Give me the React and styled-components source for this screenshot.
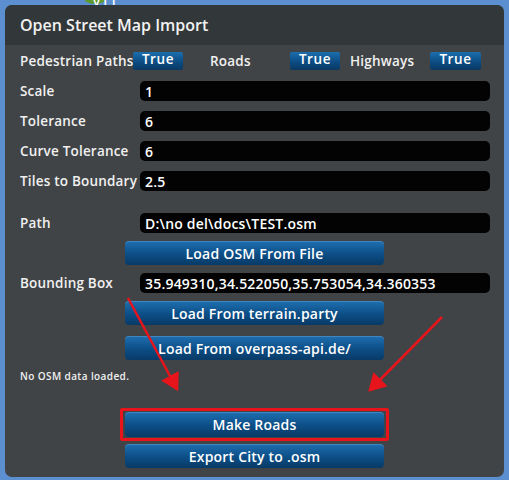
import React from "react";
import styled, { createGlobalStyle } from "styled-components";

const Global = createGlobalStyle`
  html, body {
    margin: 0;
    padding: 0;
    background: #5b8fd0;
    font-family: "Open Sans", "Noto Sans", sans-serif;
    overflow: hidden;
  }
`;

const Page = styled.div`
  position: relative;
  width: 509px;
  height: 480px;
  padding: 5px 5px 0 5px;
  box-sizing: border-box;
`;

const Marker = styled.div`
  position: absolute;
  left: 84px;
  top: -8px;
  width: 22px;
  height: 12px;
  border-radius: 50%;
  background: #5e9a2c;
`;

const MarkerText = styled.div`
  position: absolute;
  left: 93px;
  top: -8px;
  color: #ffffff;
  font-size: 13px;
  font-weight: 600;
  letter-spacing: 1px;
`;

const Panel = styled.div`
  position: relative;
  width: 499px;
  height: 472px;
  background: #404446;
  border-radius: 7px;
  overflow: hidden;
  display: flex;
  flex-direction: column;
`;

const Header = styled.div`
  height: 40px;
  background: #323739;
  display: flex;
  align-items: center;
  padding-left: 15px;
  color: #f2f2f2;
  font-size: 16px;
  font-weight: 600;
`;

const Body = styled.div`
  display: flex;
  flex-direction: column;
  padding: 0 14px 0 15px;
`;

const Row = styled.div`
  display: flex;
  align-items: center;
  height: ${(p) => p.h || 20}px;
  margin-top: ${(p) => p.mt || 0}px;
`;

const Label = styled.div`
  color: #f0f0f0;
  font-size: 13.5px;
  font-weight: 600;
  width: ${(p) => p.w || 120}px;
  margin-left: ${(p) => p.ml || 0}px;
  flex-shrink: 0;
  white-space: nowrap;
  letter-spacing: 0.2px;
`;

const Field = styled.div`
  flex: 1;
  height: 20px;
  background: #030303;
  border-radius: 5px;
  display: flex;
  align-items: center;
  padding-left: 5px;
  color: #ffffff;
  font-size: 14px;
  font-weight: 600;
  letter-spacing: 0.2px;
`;

const Toggle = styled.div`
  width: ${(p) => p.w || 49}px;
  height: 18px;
  flex-shrink: 0;
  background: linear-gradient(#1c6eae, #0b4a80 60%, #0a3a63);
  border-radius: 2px;
  color: #ffffff;
  font-size: 13.5px;
  font-weight: 600;
  text-align: center;
  line-height: 14px;
  letter-spacing: 0.6px;
`;

const Button = styled.div`
  width: 259px;
  height: ${(p) => p.h || 24}px;
  margin-left: ${(p) => (p.framed ? 0 : 105)}px;
  border-radius: 4px;
  background: linear-gradient(#1f6fb0, #0c4e86 55%, #083a66);
  box-shadow: inset 0 1px 0 rgba(120, 180, 230, 0.35);
  color: #ffffff;
  font-size: 14px;
  font-weight: 600;
  letter-spacing: 0.2px;
  display: flex;
  align-items: center;
  justify-content: center;
`;

const Highlight = styled.div`
  margin-left: 100px;
  padding: 1px 2px;
  border: 3px solid #e8141b;
  border-radius: 2px;
`;

const Status = styled.div`
  color: #f0f0f0;
  font-size: 10px;
  font-weight: 600;
  margin-top: 9px;
  height: 14px;
  line-height: 14px;
  letter-spacing: 0.4px;
`;

const Arrows = styled.svg`
  position: absolute;
  left: 0;
  top: 0;
  pointer-events: none;
`;

const fields = [
  ["Scale", "1", 11],
  ["Tolerance", "6", 10],
  ["Curve Tolerance", "6", 10],
  ["Tiles to Boundary", "2.5", 10],
];

export default function App() {
  return (
    <>
      <Global />
      <Page>
        <Marker />
        <MarkerText>v11</MarkerText>
        <Panel>
          <Header>Open Street Map Import</Header>
          <Body>
            <Row h={18} mt={7}>
              <Label w={113}>Pedestrian Paths</Label>
              <Toggle w={50}>True</Toggle>
              <Label w={80} ml={27}>Roads</Label>
              <Toggle w={50}>True</Toggle>
              <Label w={80} ml={10}>Highways</Label>
              <Toggle w={51}>True</Toggle>
            </Row>
            {fields.map(([label, value, mt]) => (
              <Row key={label} mt={mt}>
                <Label>{label}</Label>
                <Field>{value}</Field>
              </Row>
            ))}
            <Row mt={22}>
              <Label>Path</Label>
              <Field>D:\no del\docs\TEST.osm</Field>
            </Row>
            <Row h={24} mt={8}>
              <Button>Load OSM From File</Button>
            </Row>
            <Row mt={8}>
              <Label>Bounding Box</Label>
              <Field>35.949310,34.522050,35.753054,34.360353</Field>
            </Row>
            <Row h={24} mt={8}>
              <Button>Load From terrain.party</Button>
            </Row>
            <Row h={24} mt={11}>
              <Button>Load From overpass-api.de/</Button>
            </Row>
            <Status>No OSM data loaded.</Status>
            <Row h={33} mt={25}>
              <Highlight>
                <Button framed h={25}>Make Roads</Button>
              </Highlight>
            </Row>
            <Row h={24} mt={3}>
              <Button>Export City to .osm</Button>
            </Row>
          </Body>
        </Panel>
        <Arrows width="509" height="480" viewBox="0 0 509 480">
          <defs>
            <marker id="head" markerWidth="8" markerHeight="8" refX="6" refY="4" orient="auto" markerUnits="strokeWidth">
              <path d="M0,0 L7,4 L0,8 Z" fill="#e8141b" />
            </marker>
          </defs>
          <line x1="128" y1="298" x2="177" y2="389" stroke="#e8141b" strokeWidth="2.5" markerEnd="url(#head)" />
          <line x1="442" y1="317" x2="370" y2="390" stroke="#e8141b" strokeWidth="2.5" markerEnd="url(#head)" />
        </Arrows>
      </Page>
    </>
  );
}
